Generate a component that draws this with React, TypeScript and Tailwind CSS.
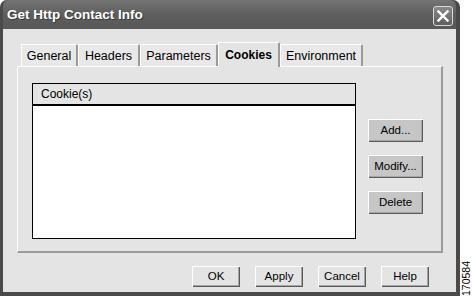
import React from 'react';

const tabs = [
  { label: 'General', w: 'w-[57px]' },
  { label: 'Headers', w: 'w-[62px]' },
  { label: 'Parameters', w: 'w-[78px]' },
  { label: 'Cookies', w: 'w-[62px]', active: true },
  { label: 'Environment', w: 'w-[83px]' },
];

const bevel =
  'shadow-[inset_1px_1px_0_#ffffff,inset_-1px_-1px_0_#5a5a5a,inset_-2px_-2px_0_#a6a6a6]';

const SideButton = ({ label }: { label: string }) => (
  <button className={`w-[55px] h-[23px] bg-[#c6c6c6] text-[11.5px] text-black ${bevel}`}>
    {label}
  </button>
);

const FooterButton = ({ label }: { label: string }) => (
  <button className={`w-[48px] h-[21px] bg-[#e4e4e4] text-[11.5px] text-black ${bevel}`}>
    {label}
  </button>
);

const CloseIcon = () => (
  <div className="w-[20px] h-[20px] rounded-[3px] border border-[#d8d8d8] bg-gradient-to-b from-[#8a8a8a] to-[#5e5e5e] flex items-center justify-center">
    <svg width="12" height="12" viewBox="0 0 12 12">
      <path d="M1.5 1.5 L10.5 10.5 M10.5 1.5 L1.5 10.5" stroke="#ffffff" strokeWidth="2.4" strokeLinecap="square" />
    </svg>
  </div>
);

export default function App() {
  return (
    <div className="w-[473px] h-[300px] bg-white flex font-['Liberation_Sans',Arial,sans-serif]">
      {/* dialog window */}
      <div className="w-[460px] h-[296px] flex flex-col bg-[#4e4e4e] rounded-t-[7px] border-l-[3px] border-r-[4px] border-b-[4px] border-[#4a4a4a]">
        {/* title bar */}
        <div className="h-[29px] flex items-center justify-between pl-[4px] pr-[3px] pt-[2px] rounded-t-[6px] bg-gradient-to-b from-[#747474] via-[#5e5e5e] to-[#585858]">
          <span className="text-white font-bold text-[13.5px] [text-shadow:1px_1px_0_#3a3a3a]">
            Get Http Contact Info
          </span>
          <CloseIcon />
        </div>

        {/* body */}
        <div className="flex-1 bg-[#e4e4e4] flex flex-col pt-[13px] pl-[14px] pr-[13px]">
          {/* tab strip */}
          <div className="h-[24px] flex items-end pl-[4px]">
            {tabs.map((t) =>
              t.active ? (
                <div
                  key={t.label}
                  className={`${t.w} h-[25px] -mb-px relative z-10 bg-[#e4e4e4] border-l border-t border-white border-r-2 border-r-[#9a9a9a] rounded-tr-[2px] flex items-start justify-center pt-[3px] text-[12px] font-bold text-black`}
                >
                  {t.label}
                </div>
              ) : (
                <div
                  key={t.label}
                  className={`${t.w} h-[22px] bg-[#e8e8e8] border-l border-t border-white border-r-2 border-r-[#9a9a9a] rounded-tr-[2px] flex items-center justify-center pt-[2px] text-[12.5px] text-black`}
                >
                  {t.label}
                </div>
              )
            )}
          </div>

          {/* tab panel */}
          <div className="w-[426px] h-[187px] border-l border-t border-white border-r-2 border-b-2 border-r-[#9a9a9a] border-b-[#9a9a9a] flex pl-[14px] pt-[16px]">
            <div className="w-[324px] h-[156px] border border-black bg-white flex flex-col">
              <div className="h-[22px] bg-[#e4e4e4] border-b-2 border-black flex items-center pl-[8px] text-[12px] text-black">
                Cookie(s)
              </div>
              <div className="flex-1" />
            </div>
            <div className="ml-[12px] pt-[36px] flex flex-col gap-[13px]">
              <SideButton label="Add..." />
              <SideButton label="Modify..." />
              <SideButton label="Delete" />
            </div>
          </div>

          {/* footer buttons */}
          <div className="mt-[13px] flex justify-end gap-[15px] pr-[14px]">
            <FooterButton label="OK" />
            <FooterButton label="Apply" />
            <FooterButton label="Cancel" />
            <FooterButton label="Help" />
          </div>
        </div>
      </div>

      {/* figure number */}
      <div className="flex-1 flex items-end justify-center pb-[4px]">
        <span className="[writing-mode:vertical-rl] rotate-180 text-[10.5px] leading-none text-black">170584</span>
      </div>
    </div>
  );
}
